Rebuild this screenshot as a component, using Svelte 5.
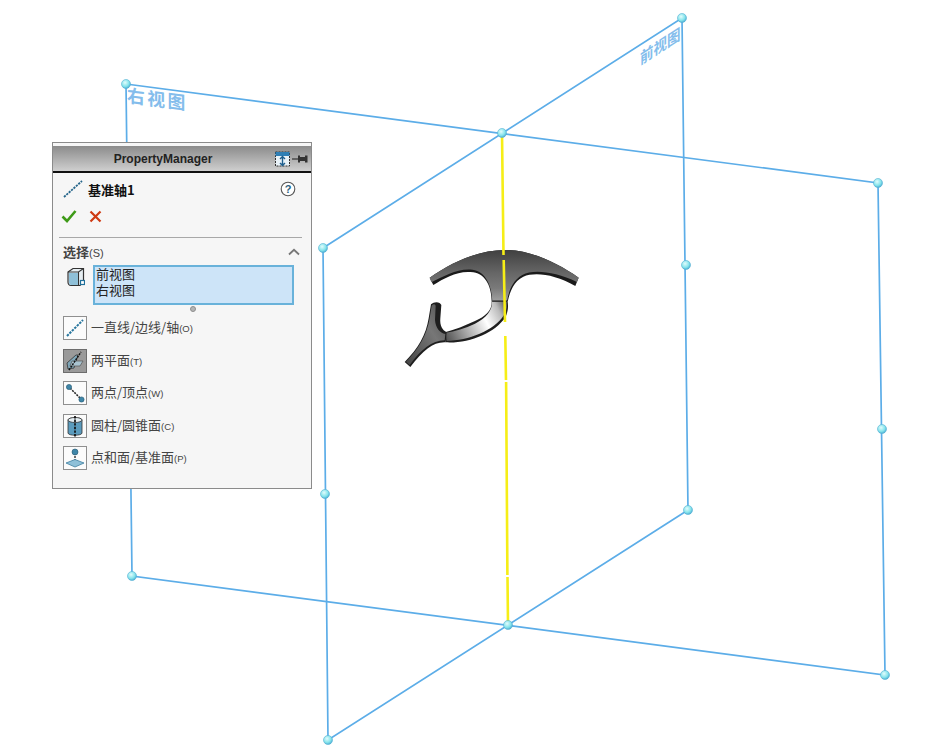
<script>
  const rows = [
    { label: '一直线/边线/轴', key: '(O)', icon: 'line' },
    { label: '两平面', key: '(T)', icon: 'planes', active: true },
    { label: '两点/顶点', key: '(W)', icon: 'points' },
    { label: '圆柱/圆锥面', key: '(C)', icon: 'cylinder' },
    { label: '点和面/基准面', key: '(P)', icon: 'pointplane' }
  ];

  // grip points of the two planes
  const handles = [
    [126, 84], [682, 18], [878, 183], [885, 675], [132, 576], [328, 740],
    [323, 248], [686, 265], [688, 510], [882, 429], [325, 494], [502, 133], [508, 625]
  ];
</script>

<main class="page">
  <svg class="scene" width="933" height="753" viewBox="0 0 933 753">
    <defs>
      <radialGradient id="ball" cx="0.4" cy="0.35" r="0.7">
        <stop offset="0" stop-color="#e2fcfc" />
        <stop offset="0.6" stop-color="#86e4ec" />
        <stop offset="1" stop-color="#45a8d0" />
      </radialGradient>
      <linearGradient id="faceTop" x1="0" y1="0" x2="0" y2="1">
        <stop offset="0" stop-color="#404040" />
        <stop offset="0.45" stop-color="#666" />
        <stop offset="0.75" stop-color="#7a7a7a" />
        <stop offset="1" stop-color="#a0a0a0" />
      </linearGradient>
      <linearGradient id="faceLow" gradientUnits="userSpaceOnUse" x1="150" y1="300" x2="335" y2="205">
        <stop offset="0" stop-color="#555" />
        <stop offset="0.3" stop-color="#aaa" />
        <stop offset="0.62" stop-color="#fff" />
        <stop offset="0.85" stop-color="#bbb" />
        <stop offset="1" stop-color="#555" />
      </linearGradient>
      <linearGradient id="faceTail" x1="0" y1="1" x2="1" y2="0">
        <stop offset="0" stop-color="#444" />
        <stop offset="0.6" stop-color="#777" />
        <stop offset="1" stop-color="#505050" />
      </linearGradient>
    </defs>

    <g class="plane">
      <polygon points="126,84 878,183 885,675 132,576" />
      <polygon points="682,18 688,510 328,740 323,248" />
    </g>

    <text class="plane-name" transform="matrix(0.991 0.131 0 1 127 102)">右视图</text>
    <text class="plane-name small" transform="matrix(0.842 -0.54 0 1 640 65)">前视图</text>

    <!-- part -->
    <g transform="translate(395 235) scale(0.3333)">
      <path fill="#1a1a1a" d="M104 128 C170 82 250 45 330 45 C410 45 490 85 551 128 L541 153 C480 118 420 110 385 125 C355 140 345 170 338 200 L290 200 C290 160 275 118 235 112 C190 105 150 128 115 150 Z" />
      <path fill="url(#faceTop)" d="M104 128 C170 82 250 45 330 45 C410 45 490 85 551 128 L546 141 C480 110 415 102 382 120 C354 136 342 165 336 198 L292 198 C291 155 272 108 233 104 C187 99 150 122 109 142 Z" />
      <path fill="#1e1e1e" d="M152 322 C220 326 300 295 332 245 C340 228 340 212 338 200 L290 200 C292 225 270 245 240 258 C210 272 180 284 150 292 Z" />
      <path fill="url(#faceLow)" d="M155 318 C220 316 297 288 327 240 C336 224 337 212 336 200 L291 200 C293 225 272 250 240 266 C210 280 180 290 152 293 Z" />
      <path stroke="#1a1a1a" stroke-width="3" fill="none" d="M292 198 L337 198" />
      <path fill="#1e1e1e" d="M108 208 C118 198 136 200 139 210 L136 250 C134 272 142 286 155 292 L152 322 C115 320 85 345 46 396 L29 381 C70 340 93 300 101 250 Z" />
      <path fill="url(#faceTail)" d="M110 212 C116 206 122 206 122 214 L120 255 C122 280 135 294 151 297 L149 316 C110 317 80 342 44 390 L33 380 C72 342 96 298 104 250 Z" />
    </g>

    <g class="axis">
      <path d="M502 133 L503.5 255 M503.7 260 L505 322 M505.3 336 L506 380 M506.1 382 L507.4 575 M507.5 577 L508 625" />
    </g>

    {#each handles as [x, y]}
      <circle cx={x} cy={y} r="4.5" fill="url(#ball)" stroke="#55b0d4" stroke-width="0.6" />
    {/each}
  </svg>

  <section class="panel">
    <header class="title">
      <span class="title-text">PropertyManager</span>
      <span class="title-icons">
        <svg width="15" height="16" viewBox="0 0 15 16">
          <rect x="0.5" y="1" width="14" height="14" fill="#e9f2f8" stroke="#2f2f2f" stroke-dasharray="2 1" />
          <rect x="0.5" y="1" width="14" height="4" fill="#2f7fb5" />
          <path d="M7.5 6 V14 M5 8 L7.5 5.5 L10 8 M5 12 L7.5 14.5 L10 12" fill="none" stroke="#1e5f8e" stroke-width="1.4" />
        </svg>
        <svg width="16" height="12" viewBox="0 0 16 12">
          <path d="M0 6 H6" stroke="#333" stroke-width="1.2" />
          <path d="M6 2.5 H8 V4 H13 V2.5 H15.5 V9.5 H13 V8 H8 V9.5 H6 Z" fill="#333" />
        </svg>
      </span>
    </header>

    <div class="feature">
      <svg width="20" height="20" viewBox="0 0 20 20">
        <path d="M1 18 L19 2" stroke="#25658a" stroke-width="1.8" stroke-dasharray="2.2 1" />
      </svg>
      <strong>基准轴1</strong>
      <svg class="help" width="16" height="16" viewBox="0 0 16 16">
        <circle cx="8" cy="8" r="6.8" fill="#fff" stroke="#555" stroke-width="1.1" />
        <text x="8" y="12" class="help-mark">?</text>
      </svg>
    </div>

    <div class="actions">
      <svg width="16" height="14" viewBox="0 0 16 14">
        <path d="M1.5 7.5 L6 12 L14.5 2" fill="none" stroke="#3e9a17" stroke-width="2.6" />
      </svg>
      <svg width="13" height="13" viewBox="0 0 13 13">
        <path d="M1.5 1.5 L11.5 11.5 M11.5 1.5 L1.5 11.5" fill="none" stroke="#cf3a12" stroke-width="2.2" />
      </svg>
    </div>

    <div class="group-head">
      <span class="group-name">选择<small>(S)</small></span>
      <svg width="12" height="8" viewBox="0 0 12 8">
        <path d="M1 6.5 L6 1.8 L11 6.5" fill="none" stroke="#777" stroke-width="1.8" />
      </svg>
    </div>

    <div class="picker">
      <svg class="cube" width="18" height="20" viewBox="0 0 18 20">
        <path d="M1 5 L6 1.5 H16.5 V15 L13 18.5 H4 C2 18.5 1 17 1 15 Z" fill="#e6eef2" stroke="#333" stroke-width="1.2" />
        <path d="M1 5 H11.5 L16.5 1.5 M11.5 5 V18" fill="none" stroke="#333" stroke-width="1.1" />
        <path d="M2 6 H11 V18 H4 C3 18 2 17 2 15 Z" fill="#8fc0d8" />
        <rect x="13.5" y="13.5" width="4" height="4" fill="#fff" stroke="#1f6f9a" stroke-width="1.2" />
      </svg>
      <div class="listbox">
        <div>前视图</div>
        <div>右视图</div>
      </div>
    </div>
    <div class="grip"></div>

    <ul class="options">
      {#each rows as row}
        <li>
          <span class="tool" class:active={row.active}>
            <svg width="22" height="22" viewBox="0 0 22 22">
              {#if row.icon === 'line'}
                <path d="M3 19 L19 3" stroke="#25749c" stroke-width="2" stroke-dasharray="2.4 1.1" />
              {:else if row.icon === 'planes'}
                <path d="M3 13 L12 5 H14 L10 18 L4 19 Z" fill="#7fa6b8" stroke="#333" stroke-width="0.8" />
                <path d="M8 11 H19 L16 16 H6 Z" fill="#a9c3d0" stroke="#555" stroke-width="0.7" />
                <path d="M5 20 L17 2" stroke="#111" stroke-width="1.5" stroke-dasharray="2 1" />
              {:else if row.icon === 'points'}
                <path d="M4 4 L18 18" stroke="#222" stroke-width="1.5" stroke-dasharray="2 1" />
                <circle cx="5" cy="5" r="2.6" fill="#3f86a8" stroke="#24566f" stroke-width="0.6" />
                <circle cx="17.5" cy="17.5" r="2.6" fill="#3f86a8" stroke="#24566f" stroke-width="0.6" />
              {:else if row.icon === 'cylinder'}
                <path d="M4 5 C4 2 18 2 18 5 V18 C18 21 4 21 4 18 Z" fill="#5b9bbd" stroke="#333" stroke-width="0.8" />
                <ellipse cx="11" cy="5" rx="7" ry="2.5" fill="#e4eef3" stroke="#333" stroke-width="0.8" />
                <path d="M11 1 V22" stroke="#111" stroke-width="1.7" stroke-dasharray="2.4 1.2" />
              {:else}
                <path d="M11 6 V14" stroke="#222" stroke-width="1.3" stroke-dasharray="2 1" />
                <circle cx="11" cy="5" r="3" fill="#3f86a8" stroke="#24566f" stroke-width="0.6" />
                <path d="M2 16 L11 12.5 L20 16 L11 20 Z" fill="#8fc0d8" stroke="#3f7f9f" stroke-width="0.8" />
              {/if}
            </svg>
          </span>
          <span class="option-text">{row.label}<small>{row.key}</small></span>
        </li>
      {/each}
    </ul>
  </section>
</main>

<style>
  :global(body) {
    background: #fff;
  }
  .page {
    position: relative;
    width: 933px;
    height: 753px;
    overflow: hidden;
    background: #fff;
    font-family: "Noto Sans CJK SC", "Liberation Sans", sans-serif;
  }
  .scene {
    position: absolute;
    left: 0;
    top: 0;
  }
  .plane polygon {
    fill: none;
    stroke: #5cade8;
    stroke-width: 1.7;
  }
  .plane-name {
    font-family: "Noto Sans CJK SC", sans-serif;
    font-weight: 700;
    font-size: 18px;
    letter-spacing: 2.5px;
    fill: #84bdec;
  }
  .plane-name.small {
    font-size: 16px;
    letter-spacing: 0;
  }
  .axis path {
    fill: none;
    stroke: #f6ee16;
    stroke-width: 2.6;
  }

  .panel {
    position: absolute;
    left: 52px;
    top: 142px;
    width: 260px;
    height: 347px;
    box-sizing: border-box;
    padding-top: 3px;
    background: #f6f6f6;
    border: 1px solid #8b8b8b;
    color: #222;
  }
  .title {
    position: relative;
    display: flex;
    align-items: center;
    justify-content: center;
    height: 25px;
    padding-right: 38px;
    background: linear-gradient(#8b8b8b, #cfcfcf);
    border-bottom: 2px solid #111;
  }
  .title-text {
    font-family: "Liberation Sans", sans-serif;
    font-size: 12px;
    font-weight: 700;
    color: #222;
  }
  .title-icons {
    position: absolute;
    right: 3px;
    top: 5px;
    display: flex;
    align-items: center;
    gap: 2px;
  }
  .feature {
    display: flex;
    align-items: center;
    height: 32px;
    padding: 0 15px 0 10px;
    gap: 5px;
  }
  .feature strong {
    font-size: 13px;
    font-weight: 700;
    line-height: 1;
    color: #111;
  }
  .help {
    margin-left: auto;
  }
  .help-mark {
    font-family: "Liberation Sans", sans-serif;
    font-size: 11px;
    font-weight: 700;
    text-anchor: middle;
    fill: #2b5f7e;
  }
  .actions {
    display: flex;
    align-items: center;
    gap: 13px;
    height: 22px;
    padding-left: 8px;
  }
  .actions svg:last-child {
    margin-left: -1px;
  }
  .group-head {
    display: flex;
    align-items: center;
    justify-content: space-between;
    height: 27px;
    margin: 10px 9px 0 6px;
    padding: 0 2px 0 4px;
    border-top: 1px solid #a8a8a8;
  }
  .group-name {
    font-size: 13px;
    font-weight: 700;
    line-height: 1;
    color: #444;
  }
  .group-name small {
    font-family: "Liberation Sans", sans-serif;
    font-size: 11px;
    font-weight: 400;
  }
  .picker {
    display: flex;
    align-items: flex-start;
    gap: 8px;
    padding-left: 14px;
  }
  .cube {
    margin-top: 2px;
  }
  .listbox {
    box-sizing: border-box;
    width: 201px;
    height: 40px;
    padding: 0 0 0 1px;
    background: #cde4f8;
    border: 2px solid #69b2da;
    font-size: 13px;
    line-height: 16px;
    color: #222;
  }
  .listbox div {
    position: relative;
    top: -1px;
  }
  .grip {
    width: 6px;
    height: 6px;
    margin: 1px 0 0 137px;
    border-radius: 50%;
    background: #b5b5b5;
    border: 1px solid #8f8f8f;
    box-sizing: border-box;
  }
  .options {
    display: flex;
    flex-direction: column;
    gap: 8.5px;
    margin: 4px 0 0;
    padding: 0 0 0 10px;
    list-style: none;
  }
  .options li {
    display: flex;
    align-items: center;
    gap: 4px;
    height: 24px;
  }
  .tool {
    display: flex;
    align-items: center;
    justify-content: center;
    box-sizing: border-box;
    width: 24px;
    height: 24px;
    background: #fbfbfb;
    border: 1px solid #8f8f8f;
  }
  .tool.active {
    background: #9a9a9a;
    border-color: #6d6d6d;
  }
  .option-text {
    font-size: 13px;
    line-height: 1;
    color: #444;
    white-space: nowrap;
    position: relative;
    top: -1px;
  }
  .option-text small {
    font-family: "Liberation Sans", sans-serif;
    font-size: 9.5px;
  }
</style>
